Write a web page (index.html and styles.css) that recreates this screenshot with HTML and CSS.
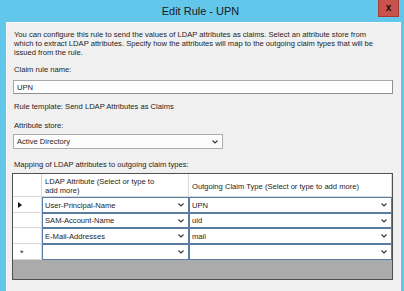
FILE: index.html
```html
<!DOCTYPE html>
<html lang="en">
<head>
    <meta charset="UTF-8">
    <meta name="viewport" content="width=device-width, initial-scale=1.0">
    <title>Edit Rule - UPN</title>
    <link rel="stylesheet" href="styles.css">
</head>
<body>
    <div class="window">
        <div class="titlebar">
            <span class="title">Edit Rule - UPN</span>
            <button class="close-btn">x</button>
        </div>
        <div class="content">
            <p class="intro">You can configure this rule to send the values of LDAP attributes as claims. Select an attribute store from<br>which to extract LDAP attributes. Specify how the attributes will map to the outgoing claim types that will be<br>issued from the rule.</p>

            <div class="label label-name">Claim rule name:</div>
            <div class="textbox">UPN</div>

            <div class="label label-template">Rule template: Send LDAP Attributes as Claims</div>

            <div class="label label-store">Attribute store:</div>
            <div class="combo">
                <span>Active Directory</span>
                <svg class="chevron" width="6" height="4" viewBox="0 0 6 4"><polyline points="0.5,0.5 3,3 5.5,0.5" fill="none" stroke="#333" stroke-width="1.1"/></svg>
            </div>

            <div class="label label-mapping">Mapping of LDAP attributes to outgoing claim types:</div>
            <div class="grid">
                <div class="grid-head">
                    <div class="row-head"></div>
                    <div class="head-cell col1">LDAP Attribute (Select or type to<br>add more)</div>
                    <div class="head-cell col2">Outgoing Claim Type (Select or type to add more)</div>
                </div>
                <div class="grid-row h16">
                    <div class="row-head"><span class="current"></span></div>
                    <div class="cell col1"><span>User-Principal-Name</span><svg class="chevron" width="6" height="4" viewBox="0 0 6 4"><polyline points="0.5,0.5 3,3 5.5,0.5" fill="none" stroke="#333" stroke-width="1.1"/></svg></div>
                    <div class="cell col2"><span>UPN</span><svg class="chevron" width="6" height="4" viewBox="0 0 6 4"><polyline points="0.5,0.5 3,3 5.5,0.5" fill="none" stroke="#333" stroke-width="1.1"/></svg></div>
                </div>
                <div class="grid-row h15">
                    <div class="row-head"></div>
                    <div class="cell col1"><span>SAM-Account-Name</span><svg class="chevron" width="6" height="4" viewBox="0 0 6 4"><polyline points="0.5,0.5 3,3 5.5,0.5" fill="none" stroke="#333" stroke-width="1.1"/></svg></div>
                    <div class="cell col2"><span>uid</span><svg class="chevron" width="6" height="4" viewBox="0 0 6 4"><polyline points="0.5,0.5 3,3 5.5,0.5" fill="none" stroke="#333" stroke-width="1.1"/></svg></div>
                </div>
                <div class="grid-row h16">
                    <div class="row-head"></div>
                    <div class="cell col1"><span>E-Mail-Addresses</span><svg class="chevron" width="6" height="4" viewBox="0 0 6 4"><polyline points="0.5,0.5 3,3 5.5,0.5" fill="none" stroke="#333" stroke-width="1.1"/></svg></div>
                    <div class="cell col2"><span>mail</span><svg class="chevron" width="6" height="4" viewBox="0 0 6 4"><polyline points="0.5,0.5 3,3 5.5,0.5" fill="none" stroke="#333" stroke-width="1.1"/></svg></div>
                </div>
                <div class="grid-row h16">
                    <div class="row-head"><span class="new-row">*</span></div>
                    <div class="cell col1"><span></span><svg class="chevron" width="6" height="4" viewBox="0 0 6 4"><polyline points="0.5,0.5 3,3 5.5,0.5" fill="none" stroke="#333" stroke-width="1.1"/></svg></div>
                    <div class="cell col2"><span></span><svg class="chevron" width="6" height="4" viewBox="0 0 6 4"><polyline points="0.5,0.5 3,3 5.5,0.5" fill="none" stroke="#333" stroke-width="1.1"/></svg></div>
                </div>
            </div>
        </div>
    </div>
</body>
</html>
```

FILE: styles.css
```css
body {
    margin: 0;
    font-family: "Liberation Sans", Arial, sans-serif;
    color: #1e1e1e;
}

.window {
    width: 404px;
    height: 291px;
    box-sizing: border-box;
    background-color: #62c7eb;
    padding: 0 3px 0 6px;
    display: flex;
    flex-direction: column;
}

.titlebar {
    height: 22px;
    flex-shrink: 0;
    display: flex;
    align-items: center;
    justify-content: center;
    position: relative;
}

.title {
    font-size: 11px;
    color: #1a1a1a;
    margin-left: -6px;
    margin-top: -1px;
}

.close-btn {
    position: absolute;
    top: 0;
    right: 2px;
    width: 21px;
    height: 17px;
    padding: 0;
    border: 1px solid #a53a35;
    border-top: none;
    background-color: #c9524c;
    color: #1b0b0a;
    font-family: "Liberation Sans", Arial, sans-serif;
    font-size: 10px;
    font-weight: bold;
    line-height: 14px;
}

.content {
    flex: 1;
    background-color: #f0f0f0;
    border-top: 1px solid #fbfbfb;
    border-left: 1px solid #fbfbfb;
    padding: 0 8px 0 6px;
    font-size: 7.6px;
    line-height: 9px;
}

.intro {
    margin: 7px 0 0 1px;
    white-space: nowrap;
}

.label {
    margin-left: 1px;
}

.label-name {
    margin-top: 8px;
    margin-bottom: 6px;
}

.label-template {
    margin-top: 8px;
}

.label-store {
    margin-top: 10px;
    margin-bottom: 4px;
}

.label-mapping {
    margin-top: 11px;
    margin-bottom: 4px;
}

.textbox {
    height: 14px;
    box-sizing: border-box;
    border: 1px solid #a9a9a9;
    border-right-color: #8f8f8f;
    border-bottom-color: #8f8f8f;
    background-color: #fff;
    padding-left: 3px;
    display: flex;
    align-items: center;
}

.combo {
    width: 210px;
    height: 15px;
    box-sizing: border-box;
    border: 1px solid #acacac;
    background-color: #fdfdfd;
    padding: 0 4px 0 3px;
    display: flex;
    align-items: center;
    justify-content: space-between;
}

.grid {
    margin-left: -1px;
    width: 381px;
    height: 107px;
    box-sizing: border-box;
    border: 1px solid #505050;
    background-color: #ababab;
}

.grid-head,
.grid-row {
    display: flex;
}

.grid-head {
    height: 23px;
    background-color: #fff;
}

.h16 {
    height: 16px;
}

.h15 {
    height: 15px;
}

.row-head {
    width: 29px;
    flex-shrink: 0;
    box-sizing: border-box;
    background-color: #fff;
    border-right: 1px solid #d9d9d9;
    border-bottom: 1px solid #d9d9d9;
    display: flex;
    align-items: center;
    padding-left: 4px;
}

.col1 {
    width: 147px;
    flex-shrink: 0;
}

.col2 {
    flex: 1;
}

.head-cell {
    box-sizing: border-box;
    border-right: 1px solid #d9d9d9;
    border-bottom: 1px solid #d9d9d9;
    padding: 2px 0 0 3px;
    display: flex;
    align-items: center;
}

.cell {
    box-sizing: border-box;
    border: 1px solid #5a7ca3;
    background-color: #fff;
    padding: 0 4px 0 2px;
    display: flex;
    align-items: center;
    justify-content: space-between;
}

.current {
    width: 0;
    height: 0;
    border-left: 4px solid #111;
    border-top: 3px solid transparent;
    border-bottom: 3px solid transparent;
    margin-left: 1px;
}

.new-row {
    font-size: 9px;
    margin-left: 3px;
    margin-top: 3px;
}
```
